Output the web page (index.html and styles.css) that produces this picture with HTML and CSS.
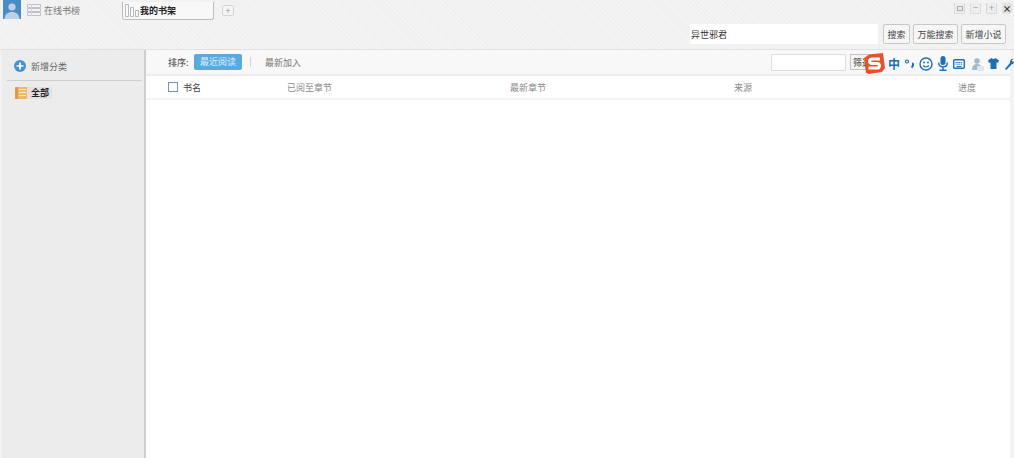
FILE: index.html
```html
<!DOCTYPE html>
<html lang="zh">
<head>
<meta charset="utf-8">
<title>我的书架</title>
<link rel="stylesheet" href="styles.css">
</head>
<body>
<div class="app">
  <header class="top">
    <div class="tabs">
      <svg class="avatar" width="18" height="19" viewBox="0 0 18 19"><rect width="18" height="19" fill="#4a8dc6"/><circle cx="9" cy="7" r="3.600" fill="#bcd2e4"/><path d="M1.500 19c.5-5 3.500-7 7.500-7s7 2 7.500 7z" fill="#bcd2e4"/></svg>
      <svg class="tabicon" width="14" height="12" viewBox="0 0 14 12"><path d="M.5.500h13v3H.500zM.5 4.500h13v3H.500zM.5 8.500h13v3H.500z" fill="#f3f3f3" stroke="#bcc2c7"/><path d="M4.500 .5v11" stroke="#d0d4d7"/></svg>
      <span class="tab-online">在线书榜</span>
      <div class="tab-active">
        <svg width="15" height="13" viewBox="0 0 15 13"><path d="M.5.500h3v12h-3zM5.500 3.500h3v9h-3zM10.500 6.500h3v6h-3z" fill="#fafafa" stroke="#b4babf"/></svg>
        <span>我的书架</span>
      </div>
      <button class="tab-add">+</button>
      <div class="winbtns">
        <span class="winbtn"><span class="winsq"></span></span><span class="winbtn">−</span><span class="winbtn">+</span><span class="winbtn winclose">×</span>
      </div>
    </div>
    <div class="searchbar">
      <input class="search" value="异世邪君">
      <button class="btn btn-s">搜索</button>
      <button class="btn">万能搜索</button>
      <button class="btn">新增小说</button>
    </div>
  </header>
  <div class="body">
    <aside class="side">
      <div class="addcat">
        <svg width="12" height="12" viewBox="0 0 14 14"><circle cx="7" cy="7" r="7" fill="#4a93c9"/><path d="M7 3v8M3 7h8" stroke="#fff" stroke-width="2"/></svg>
        <span>新增分类</span>
      </div>
      <div class="catwrap">
        <div class="cat">
          <svg width="12" height="12" viewBox="0 0 12 12"><rect width="12" height="12" fill="#ecb964"/><path d="M4 2.500h7M4 5.500h7M4 8.500h7" stroke="#fbeccb"/><rect width="3" height="12" fill="#dc9c46"/></svg>
          <span>全部</span>
        </div>
      </div>
    </aside>
    <main class="main">
      <div class="toolbar">
        <span class="sortlabel">排序:</span>
        <span class="sort-active">最近阅读</span>
        <span class="sep"></span>
        <span class="sort">最新加入</span>
        <div class="filter">
          <input class="filter-input">
          <button class="filter-btn">筛选</button>
        </div>
      </div>
      <div class="thead">
        <div class="col col-name"><span class="check"></span><span class="name">书名</span></div>
        <div class="col col-read">已阅至章节</div>
        <div class="col col-new">最新章节</div>
        <div class="col col-src">来源</div>
        <div class="col col-prog">进度</div>
      </div>
    </main>
  </div>
  <div class="ime">
    <svg class="ime-s" width="21" height="21" viewBox="0 0 21 21"><path d="M5 1.500L19 0l2 15-3 4-13 2-3-1-2-15z" fill="#e8512a"/><path d="M16 6H8.500Q5.500 6 5.500 8.200T8.500 10.500H13Q15.500 10.500 15.500 12.800T13 15H4.500" fill="none" stroke="#fff" stroke-width="3"/></svg>
    <span class="ime-zh">中</span>
    <svg class="ime-dots" width="9" height="10" viewBox="0 0 9 10"><circle cx="2" cy="2.500" r="1.500" fill="none" stroke="#1b6fb5" stroke-width="1.200"/><path d="M7 4.500c1.500 0 1.500 2.500-.5 4" fill="none" stroke="#1b6fb5" stroke-width="2"/></svg>
    <svg class="ime-smile" width="14" height="14" viewBox="0 0 14 14"><circle cx="7" cy="7" r="6" fill="#fff" stroke="#1b6fb5" stroke-width="1.400"/><circle cx="5" cy="5.500" r="1" fill="#1b6fb5"/><circle cx="9" cy="5.500" r="1" fill="#1b6fb5"/><path d="M4.200 8.500Q7 11.500 9.800 8.500" fill="none" stroke="#1b6fb5" stroke-width="1.200"/></svg>
    <svg class="ime-mic" width="10" height="15" viewBox="0 0 10 15"><rect x="2.500" y="0" width="5" height="9" rx="2.500" fill="#1b6fb5"/><path d="M.7 6.500Q.7 11 5 11T9.300 6.500M5 11v3M1.500 14.200h7" fill="none" stroke="#1b6fb5" stroke-width="1.400"/></svg>
    <svg class="ime-kbd" width="12" height="10" viewBox="0 0 12 10"><rect x=".7" y=".7" width="10.600" height="8.600" rx="1" fill="#fff" stroke="#1b6fb5" stroke-width="1.400"/><path d="M2.500 3.500h7M2.500 5.200h7" stroke="#1b6fb5" stroke-dasharray="1.200 .6"/><path d="M3.500 7.500h5" stroke="#1b6fb5"/></svg>
    <svg class="ime-user" width="12" height="13" viewBox="0 0 12 13"><circle cx="5" cy="3" r="2.800" fill="#a5b9c7"/><path d="M0 12c0-4 2-6 5-6s5 2 5 6z" fill="#a5b9c7"/><rect x="5" y="8" width="7" height="5" rx="1" fill="#dfe6eb"/></svg>
    <svg class="ime-shirt" width="11" height="11" viewBox="0 0 11 11"><path d="M3.500 0L0 2.500l1 2.500L2.500 4.200V11h6V4.200L10 5l1-2.500L7.500 0Q5.500 2 3.500 0z" fill="#1b6fb5"/></svg>
    <svg class="ime-tool" width="11" height="12" viewBox="0 0 12 13"><path d="M1 12L6.500 5.500Q6 2 9 .8L10.500 .5 8.500 3 10 4.500 12 2.500Q12 6 8.500 6.700L2.500 13z" fill="#1b6fb5"/></svg>
  </div>
</div>
</body>
</html>
```

FILE: styles.css
```css
* { box-sizing: border-box; }
html, body { margin: 0; padding: 0; height: 100%; background: #f2f2f2; overflow: hidden; }
body { font-family: "Noto Sans CJK SC", "Liberation Sans", sans-serif; font-size: 9px; color: #777; }
button, input { font-family: inherit; }
.app { position: relative; width: 1014px; height: 458px; display: flex; flex-direction: column; }
.top {
  height: 50px; flex: none; border-bottom: 1px solid #e2e2e2; padding: 0 0 0 3px;
  background-color: #f0f0f0;
  background-image: repeating-linear-gradient(45deg, rgba(255,255,255,.3) 0 1px, transparent 1px 3px);
}
.tabs { height: 24px; display: flex; align-items: flex-start; position: relative; }
.tabicon { margin: 4px 0 0 6px; }
.tab-online { margin: 0 0 0 3px; line-height: 22px; width: 78px; color: #777; white-space: nowrap; }
.tab-active {
  width: 92px; height: 18px; margin-top: 2px; background: #f8f8f8; border: 1px solid #bdbdbd; border-top: 0; border-radius: 0 0 3px 3px;
  display: flex; align-items: center; padding: 0 0 0 2px; font-weight: 700; color: #222;
}
.tab-add { width: 12px; height: 11px; margin: 5px 0 0 8px; padding: 0; border: 1px solid #d4d4d4; border-radius: 2px; background: #f4f4f4; color: #999; font-size: 9px; line-height: 8px; }
.winbtns { position: absolute; right: 2px; top: 3px; display: flex; gap: 5px; }
.winbtn { width: 11px; height: 11px; display: flex; align-items: center; justify-content: center; background: #ededed; border: 1px solid #dadada; border-top: 0; border-radius: 0 0 2px 2px; font-size: 9px; line-height: 8px; color: #999; }
.winsq { width: 6px; height: 5px; border: 1px solid #aaa; }
.winclose { width: 10px; color: #333; font-weight: 700; border: 0; background: #e2e2e2; }
.searchbar { display: flex; justify-content: flex-end; align-items: center; height: 20px; padding-right: 8px; gap: 3px; }
.search { width: 188px; height: 20px; margin-right: 2px; padding: 0 0 0 1px; border: 0; background: #fff; font-size: 9px; color: #333; outline: 0; }
.btn { width: 45px; height: 20px; padding: 0; border: 1px solid #c8c8c8; border-radius: 2px; background: #f6f6f6; font-size: 9px; color: #444; white-space: nowrap; }
.btn-s { width: 27px; }
.body { flex: 1; display: flex; min-height: 0; padding: 0 4px 0 2px; }
.side { width: 144px; flex: none; background: #ececec; border-right: 2px solid #cfcfcf; padding: 0 2px 0 5px; }
.addcat { height: 31px; display: flex; align-items: center; gap: 5px; padding: 2px 0 0 7px; color: #666; border-bottom: 1px solid #cfcfcf; }
.catwrap { padding: 6px 0 0 8px; }
.cat { display: flex; align-items: center; height: 12px; width: 37px; gap: 4px; background: #e2e2e2; font-weight: 700; color: #222; line-height: 10px; }
.main { flex: 1; min-width: 0; background: #fff; }
.toolbar { height: 26px; display: flex; align-items: center; padding-left: 22px; background: #f8f8f8; border-bottom: 2px solid #ececec; color: #777; }
.sortlabel { color: #444; width: 26px; }
.sort-active { height: 16px; line-height: 15px; width: 48px; text-align: center; background: #5baadd; border-radius: 2px; color: #dff0fb; }
.sep { width: 1px; height: 10px; background: #d4d4d4; margin: 0 14px 0 8px; }
.filter { margin-left: auto; display: flex; align-items: center; margin-right: 136px; gap: 4px; }
.filter-input { width: 75px; height: 17px; padding: 0; border: 1px solid #ddd; background: #fff; border-radius: 1px; }
.filter-btn { width: 24px; height: 16px; padding: 0 0 0 2px; text-align: left; border: 1px solid #c4c4c4; background: #f4f4f4; color: #333; font-size: 9px; white-space: nowrap; overflow: hidden; }
.thead { height: 24px; display: flex; align-items: center; border-bottom: 2px solid #f3f3f3; }
.col { white-space: nowrap; color: #8a8a8a; }
.col-name { width: 141px; padding-left: 22px; display: flex; align-items: center; gap: 5px; }
.check { width: 10px; height: 10px; border: 1px solid #6f98b5; background: #fff; }
.name { color: #444; }
.col-read { width: 223px; }
.col-new { width: 224px; }
.col-src { width: 224px; }
.col-prog { flex: 1; }
.ime { position: absolute; left: 864px; top: 53px; height: 21px; display: flex; align-items: center; }
.ime-zh { font-size: 12px; font-weight: 700; color: #1b6fb5; line-height: 1; margin-left: 3px; }
.ime-dots { margin-left: 5px; }
.ime-smile { margin-left: 5px; }
.ime-mic { margin-left: 5px; }
.ime-kbd { margin-left: 5px; }
.ime-user { margin-left: 7px; margin-top: 2px; }
.ime-shirt { margin-left: 4px; }
.ime-tool { margin-left: 5px; }
```
